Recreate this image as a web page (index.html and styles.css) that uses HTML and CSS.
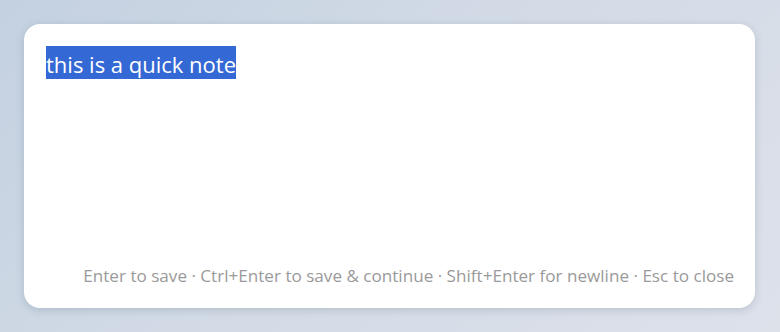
FILE: index.html
```html
<!DOCTYPE html>
<html lang="en">
<head>
    <meta charset="UTF-8">
    <meta name="viewport" content="width=device-width, initial-scale=1.0">
    <title>Quick Note</title>
    <link rel="stylesheet" href="styles.css">
</head>
<body>

    <div class="note-card">
        <div class="note-input"><span class="selected">this is a quick note</span></div>
        <p class="hint">Enter to save · Ctrl+Enter to save &amp; continue · Shift+Enter for newline · Esc to close</p>
    </div>

</body>
</html>
```

FILE: styles.css
```css
html, body {
    height: 100%;
}
body {
    font-family: 'Open Sans', 'Noto Sans', sans-serif;
    background: linear-gradient(135deg, #c4d1e1 0%, #d3dbe6 50%, #dde1ea 100%);
    margin: 0;
    padding: 24px 25px 24px 24px;
    box-sizing: border-box;
}
.note-card {
    height: 100%;
    background-color: #fff;
    border-radius: 16px;
    box-shadow: 0 2px 8px rgba(40, 60, 90, 0.18);
    padding: 22px 21px 20px 22px;
    box-sizing: border-box;
    display: flex;
    flex-direction: column;
}
.note-input {
    flex: 1;
    font-size: 22px;
    color: #222;
}
.selected {
    display: inline-block;
    line-height: 34px;
    padding-top: 1px;
    height: 33px;
    box-sizing: border-box;
    background-color: #3468d4;
    color: #fff;
}
.hint {
    margin: 0;
    text-align: right;
    font-size: 17.1px;
    line-height: 24px;
    color: #9a9a9a;
}
```
